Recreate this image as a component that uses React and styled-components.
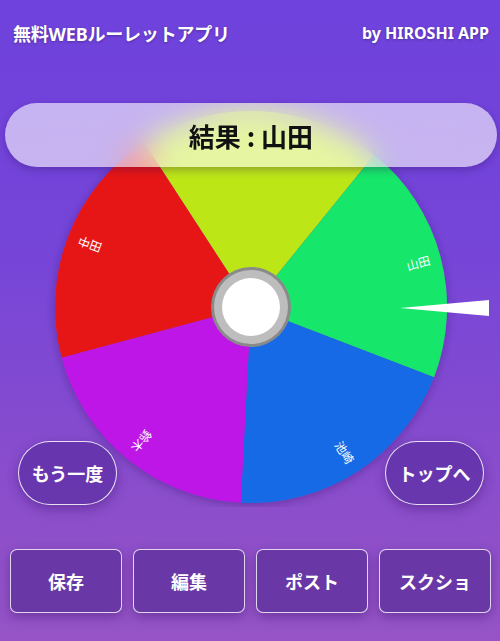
import styled, { createGlobalStyle } from 'styled-components';

const GlobalStyle = createGlobalStyle`
  html, body {
    margin: 0;
    padding: 0;
  }
  body {
    font-family: "Noto Sans", "Noto Sans CJK JP", sans-serif;
    background: #7c48d4;
  }
`;

const Page = styled.div`
  width: 500px;
  min-height: 641px;
  display: flex;
  flex-direction: column;
  background: linear-gradient(180deg, #6f42dd 0%, #7645d8 40%, #8a4dcc 75%, #9654c6 100%);
  overflow: hidden;
`;

const Header = styled.header`
  display: flex;
  justify-content: space-between;
  align-items: center;
  padding: 20px 11px 0 13px;
  height: 26px;
  color: #fff;
  font-weight: 700;
  text-shadow: 0 1px 3px rgba(0, 0, 0, 0.3);
`;

const Title = styled.h1`
  margin: 0;
  font-size: 18px;
  font-weight: 700;
  letter-spacing: -0.2px;
`;

const Credit = styled.span`
  font-size: 16px;
`;

const Stage = styled.div`
  position: relative;
  margin-top: 57px;
  padding-top: 4px;
`;

const ResultBar = styled.div`
  position: absolute;
  top: 0;
  left: 5px;
  right: 3px;
  height: 64px;
  border-radius: 32px;
  display: flex;
  align-items: center;
  justify-content: center;
  background: rgba(255, 255, 255, 0.6);
  backdrop-filter: blur(14px);
  box-shadow: 0 3px 8px rgba(40, 10, 90, 0.3);
  font-family: "Noto Sans CJK JP", sans-serif;
  font-size: 26px;
  font-weight: 700;
  color: #111;
  z-index: 2;
`;

const WheelSvg = styled.svg`
  display: block;
  width: 500px;
  height: 400px;
`;

const SideRow = styled.div`
  display: flex;
  justify-content: space-between;
  padding: 0 16px 0 18px;
  margin-top: -66px;
`;

const PillButton = styled.button`
  width: 99px;
  height: 64px;
  border-radius: 32px;
  border: 1.5px solid rgba(255, 255, 255, 0.85);
  background: rgba(98, 50, 168, 0.85);
  box-shadow: 0 4px 12px rgba(40, 0, 90, 0.35);
  color: #fff;
  font-family: "Noto Sans CJK JP", sans-serif;
  font-size: 18px;
  font-weight: 700;
  padding: 0;
`;

const ActionGrid = styled.div`
  display: grid;
  grid-template-columns: repeat(4, 1fr);
  gap: 11px;
  padding: 0 9px 0 10px;
  margin-top: 44px;
`;

const ActionButton = styled.button`
  height: 64px;
  border-radius: 7px;
  border: 1.5px solid rgba(255, 255, 255, 0.8);
  background: rgba(100, 52, 160, 0.88);
  box-shadow: 0 4px 12px rgba(40, 0, 90, 0.35);
  color: #fff;
  font-family: "Noto Sans CJK JP", sans-serif;
  font-size: 18px;
  font-weight: 700;
  padding: 0;
`;

const CX = 251;
const CY = 200;
const R = 196;

const segments = [
  { name: '田中', color: '#e61919' },
  { name: '', color: '#bde619' },
  { name: '山田', color: '#19e66b' },
  { name: '池崎', color: '#196be6' },
  { name: '鈴木', color: '#bd19e6' },
];

const START = 255;

const pt = (deg, r) => {
  const a = (deg * Math.PI) / 180;
  return [CX + r * Math.sin(a), CY - r * Math.cos(a)];
};

const slicePath = (from, to) => {
  const [x1, y1] = pt(from, R);
  const [x2, y2] = pt(to, R);
  return `M${CX},${CY} L${x1},${y1} A${R},${R} 0 0 1 ${x2},${y2} Z`;
};

const Wheel = () => (
  <WheelSvg viewBox="0 0 500 400">
    <defs>
      <filter id="wheelShadow" x="-10%" y="-10%" width="120%" height="120%">
        <feDropShadow dx="0" dy="2" stdDeviation="5" floodColor="#2a0a5a" floodOpacity="0.35" />
      </filter>
    </defs>
    <g filter="url(#wheelShadow)">
      {segments.map((s, i) => {
        const from = START + i * 72;
        return <path key={i} d={slicePath(from, from + 72)} fill={s.color} />;
      })}
    </g>
    {segments.map((s, i) => {
      if (!s.name) return null;
      const mid = START + i * 72 + 36;
      const [x, y] = pt(mid, 173);
      return (
        <text
          key={i}
          x={x}
          y={y}
          fill="#fff"
          fontSize="12"
          fontFamily='"Noto Sans CJK JP", sans-serif'
          textAnchor="middle"
          dominantBaseline="central"
          transform={`rotate(${mid - 90} ${x} ${y})`}
        >
          {s.name}
        </text>
      );
    })}
    <circle cx={CX} cy={CY} r="40" fill="#8a8a8a" />
    <circle cx={CX} cy={CY} r="37" fill="#bdbdbd" />
    <circle cx={CX} cy={CY} r="29" fill="#fff" />
    <polygon points="400,201 489,193 489,209" fill="#fff" />
  </WheelSvg>
);

const App = () => {
  return (
    <Page>
      <GlobalStyle />
      <Header>
        <Title>無料WEBルーレットアプリ</Title>
        <Credit>by HIROSHI APP</Credit>
      </Header>
      <Stage>
        <ResultBar>結果 : 山田</ResultBar>
        <Wheel />
      </Stage>
      <SideRow>
        <PillButton>もう一度</PillButton>
        <PillButton>トップへ</PillButton>
      </SideRow>
      <ActionGrid>
        <ActionButton>保存</ActionButton>
        <ActionButton>編集</ActionButton>
        <ActionButton>ポスト</ActionButton>
        <ActionButton>スクショ</ActionButton>
      </ActionGrid>
    </Page>
  );
};

export default App;
